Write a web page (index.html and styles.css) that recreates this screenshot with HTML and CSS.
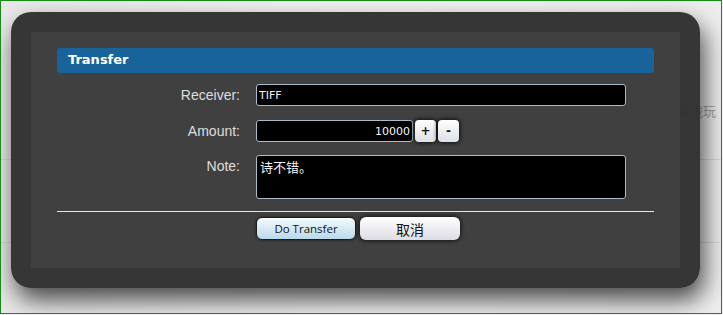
FILE: index.html
```html
<!DOCTYPE html>
<html>
<head>
<meta charset="utf-8">
<link rel="stylesheet" href="styles.css">
</head>
<body>
<div class="page">
  <div class="bg-row bg-row-a"></div>
  <div class="bg-row bg-row-b"></div>
  <div class="bg-text">待珑玩</div>
  <div class="dialog">
    <div class="dialog-inner">
      <div class="title">Transfer</div>
      <div class="form">
        <div class="row">
          <label class="label">Receiver:</label>
          <div class="field"><input class="input input-wide" type="text" value="TIFF"></div>
        </div>
        <div class="row">
          <label class="label">Amount:</label>
          <div class="field">
            <input class="input input-amount" type="text" value="10000">
            <button class="step">+</button>
            <button class="step">-</button>
          </div>
        </div>
        <div class="row row-top">
          <label class="label label-note">Note:</label>
          <div class="field"><textarea class="input note">诗不错。</textarea></div>
        </div>
      </div>
      <div class="rule"></div>
      <div class="actions">
        <button class="btn btn-primary">Do Transfer</button>
        <button class="btn btn-cancel">取消</button>
      </div>
    </div>
  </div>
</div>
</body>
</html>
```
FILE: styles.css
```css
html, body {
  margin: 0;
  padding: 0;
  background: #f2f2f2;
}
.page {
  position: relative;
  width: 720px;
  height: 312px;
  border: 1px solid #178a17;
  background: linear-gradient(90deg, #e9e9e9 0%, #f3f3f3 50%, #eeeeee 100%);
  overflow: hidden;
  font-family: "Liberation Sans", Arial, sans-serif;
}
.bg-row {
  position: absolute;
  left: 0;
  right: 0;
  height: 1px;
  background: #d8d8d8;
}
.bg-row-a { top: 158px; }
.bg-row-b { top: 241px; }
.bg-text {
  position: absolute;
  left: 676px;
  top: 100px;
  font-family: "Noto Sans CJK SC", sans-serif;
  font-size: 13px;
  color: #a8a8a8;
  white-space: nowrap;
}
.dialog {
  position: absolute;
  left: 10px;
  top: 11px;
  width: 649px;
  height: 236px;
  padding: 20px;
  border-radius: 20px;
  background: rgba(46, 46, 46, 0.96);
  box-shadow: 4px 12px 24px rgba(0, 0, 0, 0.7);
}
.dialog-inner {
  height: 100%;
  background: #404040;
  padding: 16px 26px 0;
  box-sizing: border-box;
}
.title {
  height: 25px;
  line-height: 24px;
  background: #17639a;
  border-radius: 3px;
  color: #ffffff;
  font-family: "DejaVu Sans", sans-serif;
  font-weight: bold;
  font-size: 13px;
  padding-left: 11px;
}
.form {
  display: flex;
  flex-direction: column;
  gap: 14px;
  margin-top: 11px;
}
.row {
  display: flex;
  align-items: center;
  gap: 16px;
}
.row-top {
  align-items: flex-start;
  margin-top: -1px;
}
.label {
  width: 183px;
  text-align: right;
  color: #dedede;
  font-size: 14px;
}
.label-note {
  padding-top: 3px;
}
.field {
  display: flex;
  align-items: center;
  gap: 2px;
}
.input {
  box-sizing: border-box;
  height: 22px;
  background: #000000;
  border: 1px solid #a9bcc9;
  border-radius: 3px;
  color: #f4f4f4;
  font-family: "DejaVu Sans", sans-serif;
  font-size: 11px;
  padding: 0 2px;
  margin: 0;
  outline: none;
}
.input-wide { width: 370px; }
.input-amount {
  width: 157px;
  text-align: right;
}
.note {
  width: 370px;
  height: 44px;
  resize: none;
  padding: 2px 3px;
  font-family: "Noto Sans CJK SC", sans-serif;
  font-size: 13px;
  line-height: 17px;
  overflow: hidden;
}
.step {
  box-sizing: border-box;
  width: 21px;
  height: 22px;
  margin: 0;
  padding: 0;
  border: none;
  border-radius: 4px;
  background: linear-gradient(#ffffff, #dedfe6);
  box-shadow: 0 0 4px 1px rgba(0, 0, 0, 0.8);
  color: #111;
  font-family: "DejaVu Sans", sans-serif;
  font-weight: bold;
  font-size: 12px;
  line-height: 20px;
}
.rule {
  height: 1px;
  background: #e8e8e8;
  margin-top: 12px;
}
.actions {
  display: flex;
  gap: 4px;
  margin-top: 5px;
  padding-left: 199px;
}
.btn {
  box-sizing: border-box;
  width: 100px;
  height: 23px;
  margin: 0;
  padding: 0;
  border-radius: 6px;
  color: #111;
  cursor: pointer;
}
.btn-primary {
  border: 1px solid #1c1c1c;
  background: linear-gradient(#f4fafd, #b9d9eb);
  font-family: "Open Sans", sans-serif;
  font-size: 11.5px;
  box-shadow: 0 0 3px rgba(0, 0, 0, 0.6);
}
.btn-cancel {
  border: none;
  background: linear-gradient(#ffffff, #dcdce4);
  font-family: "Noto Sans CJK SC", sans-serif;
  font-size: 14px;
  box-shadow: 0 0 4px 1px rgba(0, 0, 0, 0.7);
}
```
